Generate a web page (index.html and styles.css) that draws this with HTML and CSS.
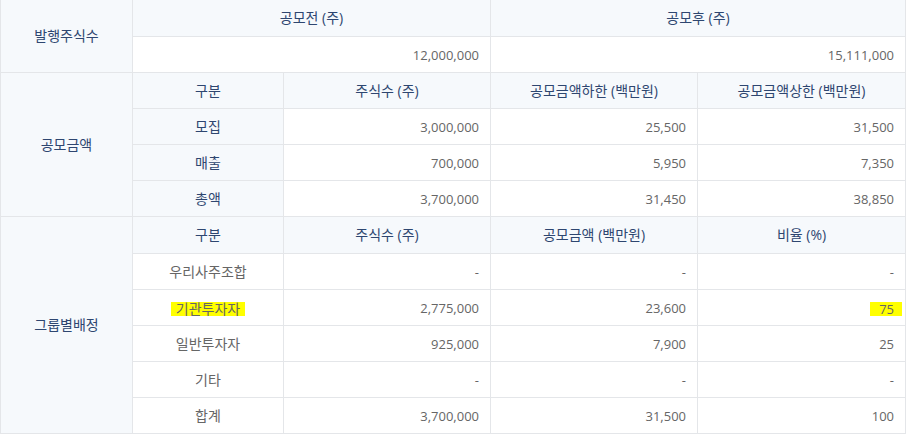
FILE: index.html
```html
<!DOCTYPE html>
<html lang="ko">
<head>
<meta charset="utf-8">
<link rel="stylesheet" href="styles.css">
</head>
<body>
<table class="ipo">
  <colgroup>
    <col class="c0"><col class="c1"><col class="c2"><col class="c3"><col class="c4">
  </colgroup>
  <tbody>
    <tr class="tall">
      <th class="side" rowspan="2">발행주식수</th>
      <th colspan="2">공모전 (주)</th>
      <th colspan="2">공모후 (주)</th>
    </tr>
    <tr>
      <td class="num" colspan="2">12,000,000</td>
      <td class="num" colspan="2">15,111,000</td>
    </tr>
    <tr>
      <th class="side" rowspan="4">공모금액</th>
      <th>구분</th>
      <th>주식수 (주)</th>
      <th>공모금액하한 (백만원)</th>
      <th>공모금액상한 (백만원)</th>
    </tr>
    <tr><th>모집</th><td class="num">3,000,000</td><td class="num">25,500</td><td class="num">31,500</td></tr>
    <tr><th>매출</th><td class="num">700,000</td><td class="num">5,950</td><td class="num">7,350</td></tr>
    <tr><th>총액</th><td class="num">3,700,000</td><td class="num">31,450</td><td class="num">38,850</td></tr>
    <tr class="tall">
      <th class="side" rowspan="7">그룹별배정</th>
      <th>구분</th>
      <th>주식수 (주)</th>
      <th>공모금액 (백만원)</th>
      <th>비율 (%)</th>
    </tr>
    <tr><td class="label">우리사주조합</td><td class="num">-</td><td class="num">-</td><td class="num">-</td></tr>
    <tr><td class="label"><span class="hl">기관투자자</span></td><td class="num">2,775,000</td><td class="num">23,600</td><td class="num"><span class="hl hl-num">75</span></td></tr>
    <tr><td class="label">일반투자자</td><td class="num">925,000</td><td class="num">7,900</td><td class="num">25</td></tr>
    <tr><td class="label">기타</td><td class="num">-</td><td class="num">-</td><td class="num">-</td></tr>
    <tr><td class="label">합계</td><td class="num">3,700,000</td><td class="num">31,500</td><td class="num">100</td></tr>
  </tbody>
</table>
</body>
</html>
```

FILE: styles.css
```css
html, body {
  margin: 0;
  padding: 0;
  background: #ffffff;
}

body {
  font-family: "Open Sans", "Noto Sans CJK KR", sans-serif;
  font-size: 13px;
  color: #666666;
}

.ipo {
  border-collapse: separate;
  border-spacing: 0;
  table-layout: fixed;
  width: 905px;
  border-left: 1px solid #e4e6e9;
}

.c0 { width: 132px; }
.c1 { width: 151px; }
.c2 { width: 207px; }
.c3 { width: 207px; }
.c4 { width: 208px; }

.ipo th,
.ipo td {
  height: 35px;
  padding: 0 11px;
  border-right: 1px solid #e4e6e9;
  border-bottom: 1px solid #e4e6e9;
  line-height: 18px;
  vertical-align: middle;
  white-space: nowrap;
}

.ipo .tall th:not(.side) {
  height: 36px;
}

.ipo th {
  background: #f6f9fc;
  color: #2e4670;
  font-weight: 400;
  font-size: 14px;
  text-align: center;
}

.ipo td {
  background: #ffffff;
  color: #666666;
}

.ipo td.num {
  text-align: right;
  font-size: 13px;
}

.ipo td.label {
  text-align: center;
  font-size: 14px;
}

.ipo th.side {
  background: #f6f9fc;
}

.hl {
  display: inline-block;
  background: #ffff00;
  height: 14px;
  line-height: 14px;
  padding: 0 5px;
  vertical-align: middle;
}

.hl-num {
  padding: 0 8px 0 9px;
  margin-right: -8px;
}
```
